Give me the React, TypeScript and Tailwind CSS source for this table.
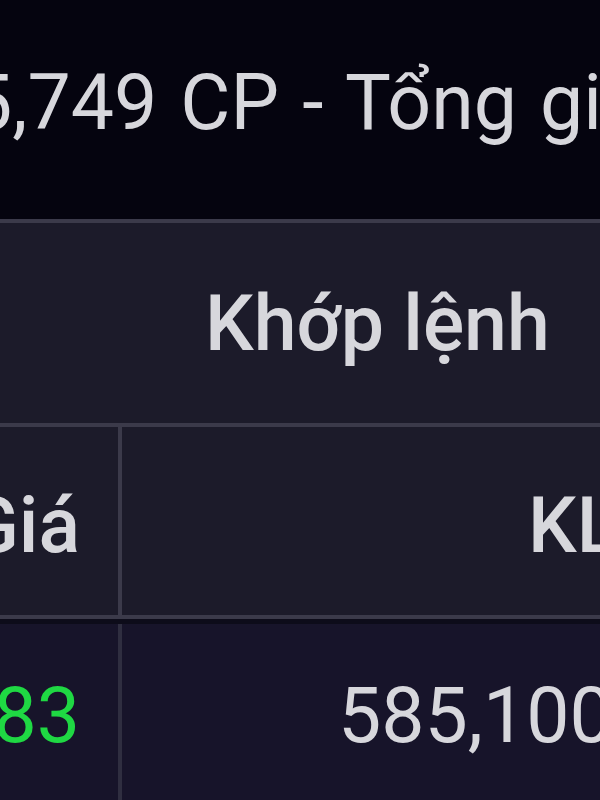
export default function App() {
  return (
    <div
      className="w-[600px] h-[800px] overflow-hidden bg-[#05040f] text-[#d7d7dc]"
      style={{ fontFamily: 'Roboto, "Noto Sans", sans-serif' }}
    >
      {/* summary line */}
      <div className="h-[219px] pt-[65px] whitespace-nowrap">
        <div className="ml-[-31px] text-[77px] leading-[77px] [word-spacing:4px]">5,749 CP - Tổng giá trị</div>
      </div>
      <div className="h-[4px] bg-[#3b3a4a]" />

      {/* group header */}
      <div className="h-[200px] bg-[#1c1b2a] pt-[63px] whitespace-nowrap">
        <div className="pl-[205px] text-[77px] leading-[77px] font-medium">Khớp lệnh</div>
      </div>
      <div className="h-[4px] bg-[#3b3a4a]" />

      {/* column header */}
      <div className="flex h-[188px] bg-[#1c1b2a] whitespace-nowrap">
        <div className="w-[118px] shrink-0 flex justify-end pt-[61px] pr-[38px] text-[77px] leading-[77px] font-medium">
          <span className="shrink-0">Giá</span>
        </div>
        <div className="w-[4px] shrink-0 bg-[#3b3a4a]" />
        <div className="flex-1 pt-[61px] pl-[406px] text-[77px] leading-[77px] font-medium">KL</div>
      </div>
      <div className="h-[4px] bg-[#3b3a4a]" />
      <div className="h-[5px] bg-[#0d0c1a]" />

      {/* data row */}
      <div className="flex h-[180px] bg-[#17142a] whitespace-nowrap">
        <div className="w-[118px] shrink-0 flex justify-end pt-[54px] pr-[38px] text-[77px] leading-[77px] text-[#1fd843]">
          <span className="shrink-0">23.83</span>
        </div>
        <div className="w-[4px] shrink-0 bg-[#2f2e40]" />
        <div className="flex-1 pt-[54px] pl-[216px] text-[77px] leading-[77px]">585,100</div>
      </div>
    </div>
  );
}
